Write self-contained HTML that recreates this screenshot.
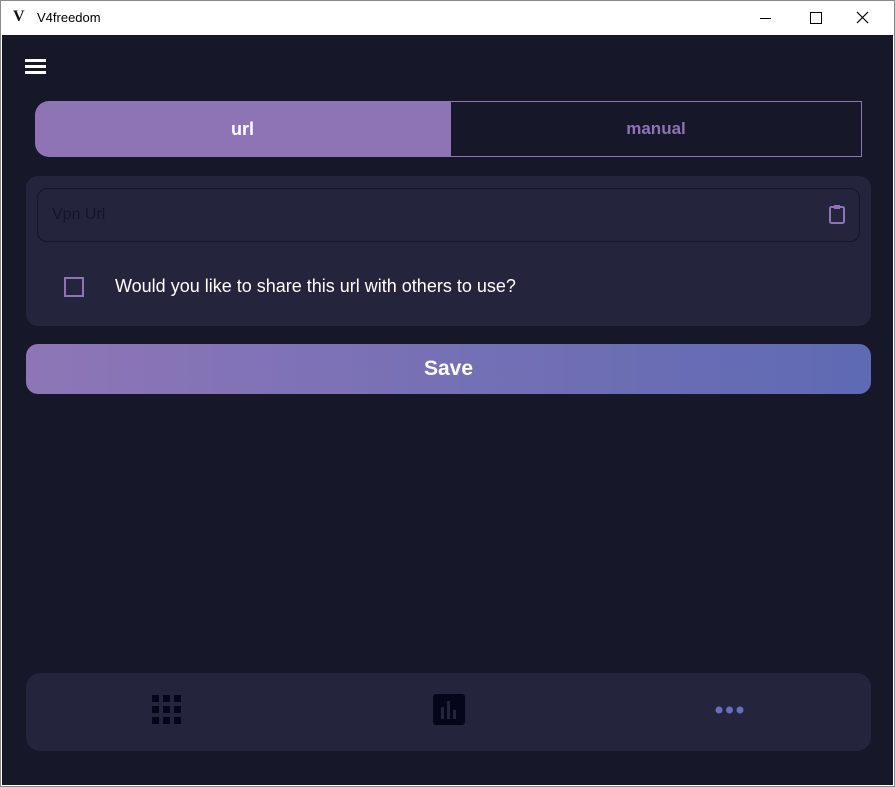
<!DOCTYPE html>
<html><head><style>
*{margin:0;padding:0;box-sizing:border-box}
body{width:895px;height:787px;overflow:hidden;background:#fff;font-family:"Liberation Sans",sans-serif;position:relative}
.win{position:absolute;left:0;top:0;width:895px;height:787px;border:1px solid #8a8a8a}
.title{position:absolute;left:1px;top:1px;width:893px;height:34px;background:#fff}
.main{position:absolute;left:2px;top:35px;width:891px;height:750px;background:#161729}
.abs{position:absolute}
</style></head><body>
<div class="win"></div>
<div class="title">
 <div class="abs" style="left:12px;top:7px;font-weight:bold;font-size:16px;color:#111;font-family:'Liberation Serif',serif">V</div>
 <div class="abs" style="left:36px;top:9px;font-size:13px;color:#000">V4freedom</div>
 <div class="abs" style="left:759px;top:17px;width:11px;height:1px;background:#000"></div>
 <div class="abs" style="left:809px;top:11px;width:12px;height:12px;border:1px solid #000"></div>
 <svg class="abs" style="left:855px;top:10px" width="13" height="13" viewBox="0 0 13 13"><path d="M1 1L12 12M12 1L1 12" stroke="#000" stroke-width="1.2"/></svg>
</div>
<div class="main">
 <div class="abs" style="left:23px;top:24px;width:21px;height:2.5px;background:#fff;box-shadow:0 6px 0 #fff,0 12px 0 #fff"></div>
 <div class="abs" style="left:33px;top:66px;width:415px;height:56px;background:#8e74b4;border-radius:14px 0 0 14px;color:#fff;font-size:18px;font-weight:bold;text-align:center;line-height:56px">url</div>
 <div class="abs" style="left:448px;top:66px;width:412px;height:56px;border:1px solid #8e74b4;color:#8e74b4;font-size:17px;font-weight:bold;text-align:center;line-height:54px">manual</div>
 <div class="abs" style="left:24px;top:141px;width:845px;height:150px;background:#24253c;border-radius:12px"></div>
 <div class="abs" style="left:35px;top:153px;width:823px;height:54px;border:1px solid #15162a;border-radius:10px;color:#14152a;font-size:16px;line-height:52px;padding-left:14px">Vpn Url</div>
 <svg class="abs" style="left:826px;top:169px" width="18" height="20" viewBox="0 0 18 20"><rect x="2" y="3" width="14" height="16" rx="1.5" fill="none" stroke="#8e74b4" stroke-width="2"/><rect x="6" y="1" width="6" height="4" fill="#8e74b4"/></svg>
 <div class="abs" style="left:62px;top:242px;width:20px;height:20px;border:2px solid #8e74b4"></div>
 <div class="abs" style="left:113px;top:241px;color:#fff;font-size:18px">Would you like to share this url with others to use?</div>
 <div class="abs" style="left:24px;top:309px;width:845px;height:50px;border-radius:12px;background:linear-gradient(90deg,#8e76b6,#5e6ab4);color:#fff;font-size:21px;font-weight:bold;text-align:center;line-height:50px">Save</div>
 <div class="abs" style="left:24px;top:638px;width:845px;height:78px;background:#24253c;border-radius:14px"></div>
 <svg class="abs" style="left:150px;top:660px" width="29" height="29" viewBox="0 0 29 29" fill="#05051c"><rect x="0" y="0" width="7" height="7"/><rect x="11" y="0" width="7" height="7"/><rect x="22" y="0" width="7" height="7"/><rect x="0" y="11" width="7" height="7"/><rect x="11" y="11" width="7" height="7"/><rect x="22" y="11" width="7" height="7"/><rect x="0" y="22" width="7" height="7"/><rect x="11" y="22" width="7" height="7"/><rect x="22" y="22" width="7" height="7"/></svg>
 <svg class="abs" style="left:431px;top:659px" width="32" height="31" viewBox="0 0 32 31"><rect width="32" height="31" rx="3" fill="#05051c"/><rect x="8" y="13" width="3" height="12" fill="#24253c"/><rect x="14" y="7" width="3" height="18" fill="#24253c"/><rect x="20" y="16" width="3" height="9" fill="#24253c"/></svg>
 <svg class="abs" style="left:712px;top:669px" width="32" height="12" viewBox="0 0 32 12" fill="#6b6cc0"><circle cx="5" cy="6" r="3.5"/><circle cx="15.5" cy="6" r="3.5"/><circle cx="26" cy="6" r="3.5"/></svg>
</div>
</body></html>
